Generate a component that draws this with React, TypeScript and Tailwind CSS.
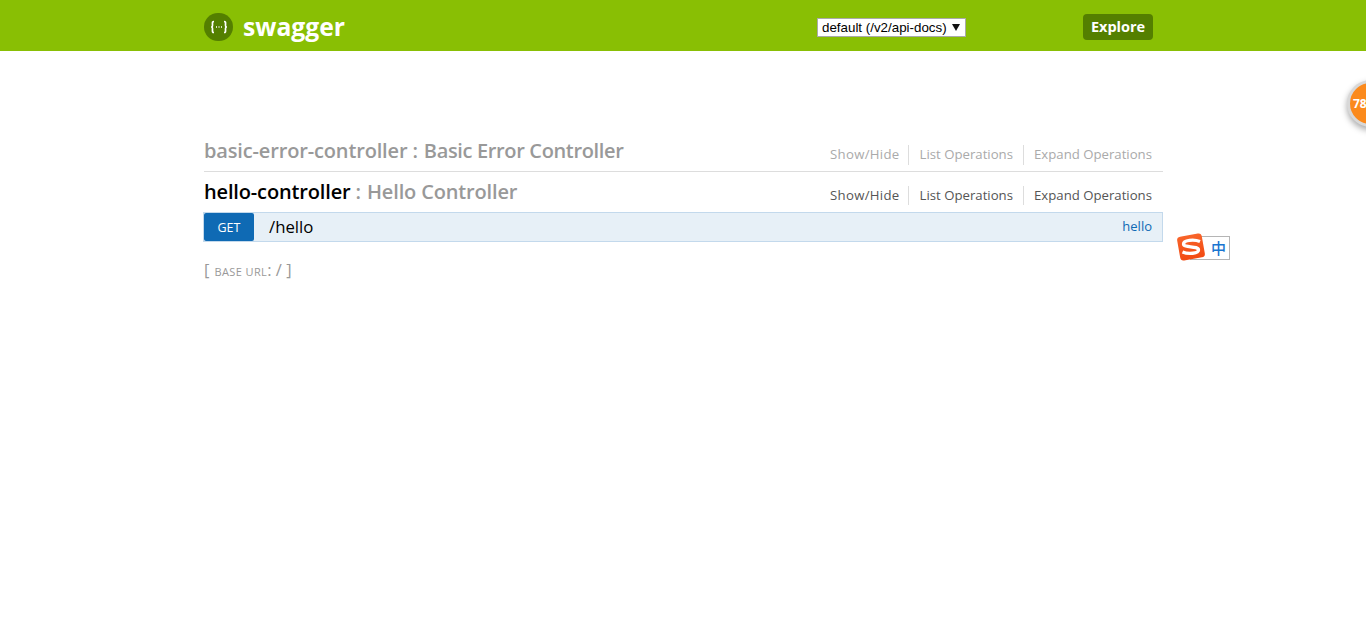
const font = { fontFamily: '"Open Sans", "Noto Sans", sans-serif' };

function SectionHeader({ name, desc, active }: { name: string; desc: string; active?: boolean }) {
  return (
    <div className={active ? "flex h-[40px] items-center justify-between" : "flex h-[41px] items-center justify-between border-b border-[#ddd]"}>
      <h2 className="text-[20px] font-semibold tracking-[-0.15px] whitespace-nowrap text-[#999]">
        <span className={active ? "text-black" : ""}>{name}</span> :{" "}
        <span className={active ? "ml-[1px]" : "ml-[1px] tracking-[-0.35px]"}>{desc}</span>
      </h2>
      <ul className={active ? "mt-[7px] mr-[11px] flex items-center text-[13.2px] text-[#555]" : "mt-[8px] mr-[11px] flex items-center text-[13.2px] text-[#aaa]"}>
        <li className="pr-[8px] tracking-[0.3px]">Show/Hide</li>
        <li className="border-l border-[#ddd] pr-[10px] pl-[11px]">List Operations</li>
        <li className="border-l border-[#ddd] pl-[10px]">Expand Operations</li>
      </ul>
    </div>
  );
}

export default function App() {
  return (
    <div className="relative h-[635px] overflow-hidden bg-white" style={font}>
      <header className="h-[51px] bg-[#89bf04]">
        <div className="mx-auto flex h-full w-[960px] items-center pt-[2px] pl-[1px]">
          <div className="flex h-[28px] w-[29px] items-center justify-center rounded-full bg-[#547f00]">
            <svg width="20" height="14" viewBox="0 0 20 14" fill="none" stroke="white" strokeWidth="1.7">
              <path d="M5 1.500C3 1.500 3.500 3 3.500 5S3.300 7 2 7c1.300 0 1.500 0 1.500 2s-.5 3.500 1.500 3.500" />
              <path d="M15 1.500c2 0 1.500 1.500 1.500 3.500s.2 2 1.500 2c-1.300 0-1.500 0-1.500 2s.5 3.500-1.500 3.500" />
              <path d="M7 7h1M9.500 7h1M12 7h1" />
            </svg>
          </div>
          <span className="mt-[2px] ml-[10px] text-[24.7px] leading-none font-bold text-white">swagger</span>
          <div className="mt-[2px] ml-[472px] flex h-[19px] w-[149px] items-center justify-between border border-[#aaa] bg-white pr-[5px] pl-[4px] text-[13.35px] leading-none text-black" style={{ fontFamily: '"Liberation Sans", sans-serif' }}>
            <span>default (/v2/api-docs)</span>
            <svg width="8" height="7" viewBox="0 0 8 7"><path d="M0 0h8L4 7z" fill="#111" /></svg>
          </div>
          <button className="ml-[117px] flex h-[26px] w-[70px] items-center justify-center rounded-[4px] bg-[#547f00] text-[14.5px] font-bold text-white">Explore</button>
        </div>
      </header>

      <main className="mx-auto mt-[80px] w-[960px] pl-[1px]">
        <SectionHeader name="basic-error-controller" desc="Basic Error Controller" />
        <SectionHeader name="hello-controller" desc="Hello Controller" active />
        <div className="-ml-[1px] flex h-[30px] items-stretch border border-[#c3d9ec] bg-[#e7f0f7]">
          <span className="flex w-[50px] items-center justify-center rounded-[2px] bg-[#0f6ab4] pt-[2px] text-[12.5px] font-normal text-white">GET</span>
          <span className="ml-[15px] flex items-center text-[16.8px] text-black">/hello</span>
          <span className="mr-[10px] ml-auto flex items-center text-[13px] text-[#0f6ab4]">hello</span>
        </div>
        <p className="mt-[16px] flex items-baseline text-[16.5px] text-[#999]">
          [<span className="mx-[5px] text-[11px] tracking-[0.4px] uppercase">base url</span>
          <span className="-ml-[5px]">: / ]</span>
        </p>
      </main>

      {/* floating badge at the page edge */}
      <div className="absolute top-[80px] left-[1347px] flex h-[47px] w-[47px] items-center rounded-full border-[3px] border-[#d8d8d8] bg-[#fb8a1c] pl-[3px] text-[12px] font-bold text-white shadow-[0_3px_6px_rgba(0,0,0,0.35)]">78</div>

      {/* input method widget */}
      <div className="absolute top-[236px] left-[1190px] flex h-[24px] w-[40px] items-center justify-end border border-[#b5b5b5] bg-white pr-[3px] text-[15px] font-medium text-[#1a75d0]" style={{ fontFamily: '"Noto Sans CJK SC", sans-serif' }}>中</div>
      <svg className="absolute top-[232px] left-[1176px]" width="30" height="30" viewBox="0 0 30 30">
        <defs>
          <linearGradient id="sogou" x1="0" y1="0" x2="0" y2="1">
            <stop offset="0" stopColor="#f8642a" />
            <stop offset="1" stopColor="#f24a12" />
          </linearGradient>
        </defs>
        <rect x="2.500" y="3" width="25" height="24" rx="3.500" fill="url(#sogou)" transform="rotate(-10 15 15)" />
        <path d="M24 9.500C18 7 7.500 8 7.500 12c0 4 15 1.500 15 6 0 3.500-10 4.500-16 2" fill="none" stroke="white" strokeWidth="3.300" />
      </svg>
    </div>
  );
}
